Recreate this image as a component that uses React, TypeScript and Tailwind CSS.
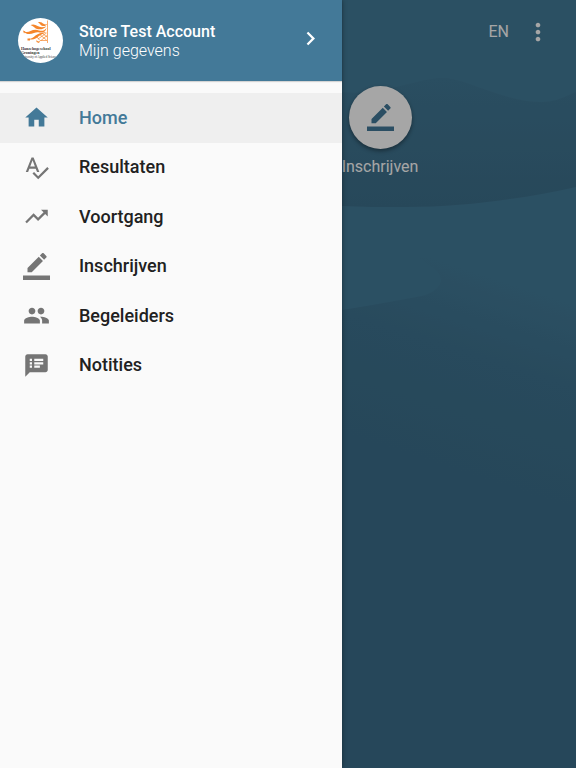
import type { ReactNode } from 'react';
import { MdChevronRight, MdHome, MdMoreVert, MdPeople, MdSpeakerNotes, MdTrendingUp } from 'react-icons/md';

type IconProps = { className?: string };

type NavItem = {
  label: string;
  icon: ReactNode;
  active?: boolean;
};

function EnrollIcon({ className }: IconProps) {
  return (
    <svg viewBox="0 0 24 24" fill="currentColor" aria-hidden="true" className={className}>
      <path d="M17.75 7 14 3.25l-10 10V17h3.75l10-10zm2.96-2.96c.39-.39.39-1.02 0-1.41L18.37.29c-.39-.39-1.02-.39-1.41 0L15 2.25 18.75 6l1.96-1.96z" />
      <path d="M0 20h24v4H0z" />
    </svg>
  );
}

function ResultsIcon({ className }: IconProps) {
  return (
    <svg viewBox="0 0 24 24" fill="currentColor" aria-hidden="true" className={className}>
      <path d="M12.45 16h2.09L9.43 3H7.57L2.46 16h2.09l1.12-3h5.64l1.14 3zm-6.02-5L8.5 5.48 10.57 11H6.43zm15.16.59-8.09 8.09L9.83 16l-1.41 1.41 5.09 5.09L23 13l-1.41-1.41z" />
    </svg>
  );
}

function SchoolLogo({ className }: IconProps) {
  return (
    <svg viewBox="0 0 45 45" className={className} role="img" aria-label="Hanzehogeschool Groningen">
      <g fill="#f5862b">
        <path d="M20 4.200c3-.8 4 .6 5.500 1.600 1.300.8 2.500.8 3.500.2-.8 1.800-3 2.600-5 1.800-1.500-.7-2-2.400-4-3.600z" />
        <path d="M12.500 7c3-1.300 5-.2 7 1 2.500 1.500 5.500 1.500 9 .2-2 2.500-6 3.800-9.500 2.800-2.500-.8-3.500-3-6.500-4z" />
        <path d="M6 13.500c2.500 1 4.500.6 6.500-.5 3-1.600 6-1.600 8.500-.6 3 1.100 5.500.2 7.500-2.400-.5 3.500-3.500 5-7 4.500-2-.3-3.500-.3-5.500.5-4 1.600-8 1.500-10-1.500z" />
        <path d="M5 12.500l2.500 1-1.500 2zM9.500 20.500h2.500v2H9.500zM18.500 22l1.500 1.500 2-.5-1 2-2.500-1z" />
        <path d="M11 21c3-.3 4.500-2 6.500-3.500 3.500-2.600 7-3 11-3.500-3 2-5.500 2.300-7.500 4-3 2.600-6 4.500-10 3z" />
      </g>
      <g fill="none" stroke="#f5862b" strokeWidth="0.7">
        <path d="M29.500 2.500v22.500" />
        <path d="M18 18l4 4.500h7M21 16l7.500 6M24 15l5 4M20 21l8.500-6M23 22.500l6-5" />
      </g>
      <g fill="#333333" fontFamily="Liberation Serif, serif">
        <text x="3" y="32" fontSize="4" fontWeight="700">Hanzehogeschool</text>
        <text x="3" y="36" fontSize="4" fontWeight="700">Groningen</text>
        <text x="3" y="39.500" fontSize="3">University of Applied Sciences</text>
      </g>
    </svg>
  );
}

function Hills() {
  return (
    <svg viewBox="0 0 234 768" preserveAspectRatio="none" aria-hidden="true" className="absolute inset-0 size-full">
      <defs>
        <linearGradient id="hill" x1="0" y1="78" x2="0" y2="206" gradientUnits="userSpaceOnUse">
          <stop offset="0" stopColor="#417895" />
          <stop offset="1" stopColor="#3d6f8b" />
        </linearGradient>
        <linearGradient id="valley" x1="20" y1="440" x2="80" y2="255" gradientUnits="userSpaceOnUse">
          <stop offset="0" stopColor="#3b6e8a" />
          <stop offset="0.6" stopColor="#3e728f" />
          <stop offset="1" stopColor="#437b98" />
        </linearGradient>
      </defs>
      <path d="M0 92C40 96 70 80 98 78c25-1 62 24 102 24 14 0 24-6 34-10v95c-50 11-110 20-170 20-24 0-44 0-64-1z" fill="url(#hill)" />
      <path d="M0 310c30-5 55-9 80-14 11-3 19-9 19-16 0-8-8-12-22-22h157v510H0z" fill="url(#valley)" />
    </svg>
  );
}

const navItems: NavItem[] = [
  { label: 'Home', icon: <MdHome className="size-[27px]" />, active: true },
  { label: 'Resultaten', icon: <ResultsIcon className="size-[27px]" /> },
  { label: 'Voortgang', icon: <MdTrendingUp className="size-[27px]" /> },
  { label: 'Inschrijven', icon: <EnrollIcon className="size-[27px]" /> },
  { label: 'Begeleiders', icon: <MdPeople className="size-[27px]" /> },
  { label: 'Notities', icon: <MdSpeakerNotes className="size-[27px]" /> },
];

export default function App() {
  return (
    <div className="flex min-h-screen bg-[#437b98] font-['Roboto',sans-serif]">
      <aside className="z-10 w-[342px] shrink-0 bg-[#fafafa] shadow-[0_0_5px_rgba(0,0,0,0.4)]">
        <button className="flex h-[81px] w-full items-center px-[18px] bg-[#437998] text-left text-white shadow-[0_1px_1px_rgba(0,0,0,0.15)]">
          <SchoolLogo className="size-[45px] rounded-full bg-white" />
          <span className="ml-4 flex-1 text-base leading-[19px]">
            <span className="block font-medium">Store Test Account</span>
            <span className="block font-light">Mijn gegevens</span>
          </span>
          <MdChevronRight className="mb-1 size-[27px]" />
        </button>

        <nav className="mt-3 grid h-[297px] grid-rows-6">
          {navItems.map((item) => (
            <a
              key={item.label}
              href="#"
              aria-current={item.active ? 'page' : undefined}
              className={
                item.active
                  ? 'flex items-center gap-[29px] bg-[#efefef] pl-[23px] text-lg font-medium text-[#437998]'
                  : 'flex items-center gap-[29px] pl-[23px] text-lg font-medium text-[#212121]'
              }
            >
              <span className={item.active ? 'text-[#437998]' : 'text-[#757575]'}>{item.icon}</span>
              {item.label}
            </a>
          ))}
        </nav>
      </aside>

      <main className="relative flex-1 overflow-hidden">
        <Hills />
        <div className="relative text-white">
          <header className="flex h-16 items-center justify-end gap-[15px] pr-6">
            <button className="text-base">EN</button>
            <button aria-label="Meer opties">
              <MdMoreVert className="size-7" />
            </button>
          </header>
          <a href="#" className="mt-[22px] flex w-[76px] flex-col items-center gap-1.5 text-base">
            <span className="grid size-[63px] place-items-center rounded-full bg-white text-[#437998] shadow-[0_2px_4px_rgba(0,0,0,0.4)]">
              <EnrollIcon className="size-[27px]" />
            </span>
            Inschrijven
          </a>
        </div>
        <div className="absolute inset-0 bg-black/35" />
      </main>
    </div>
  );
}
